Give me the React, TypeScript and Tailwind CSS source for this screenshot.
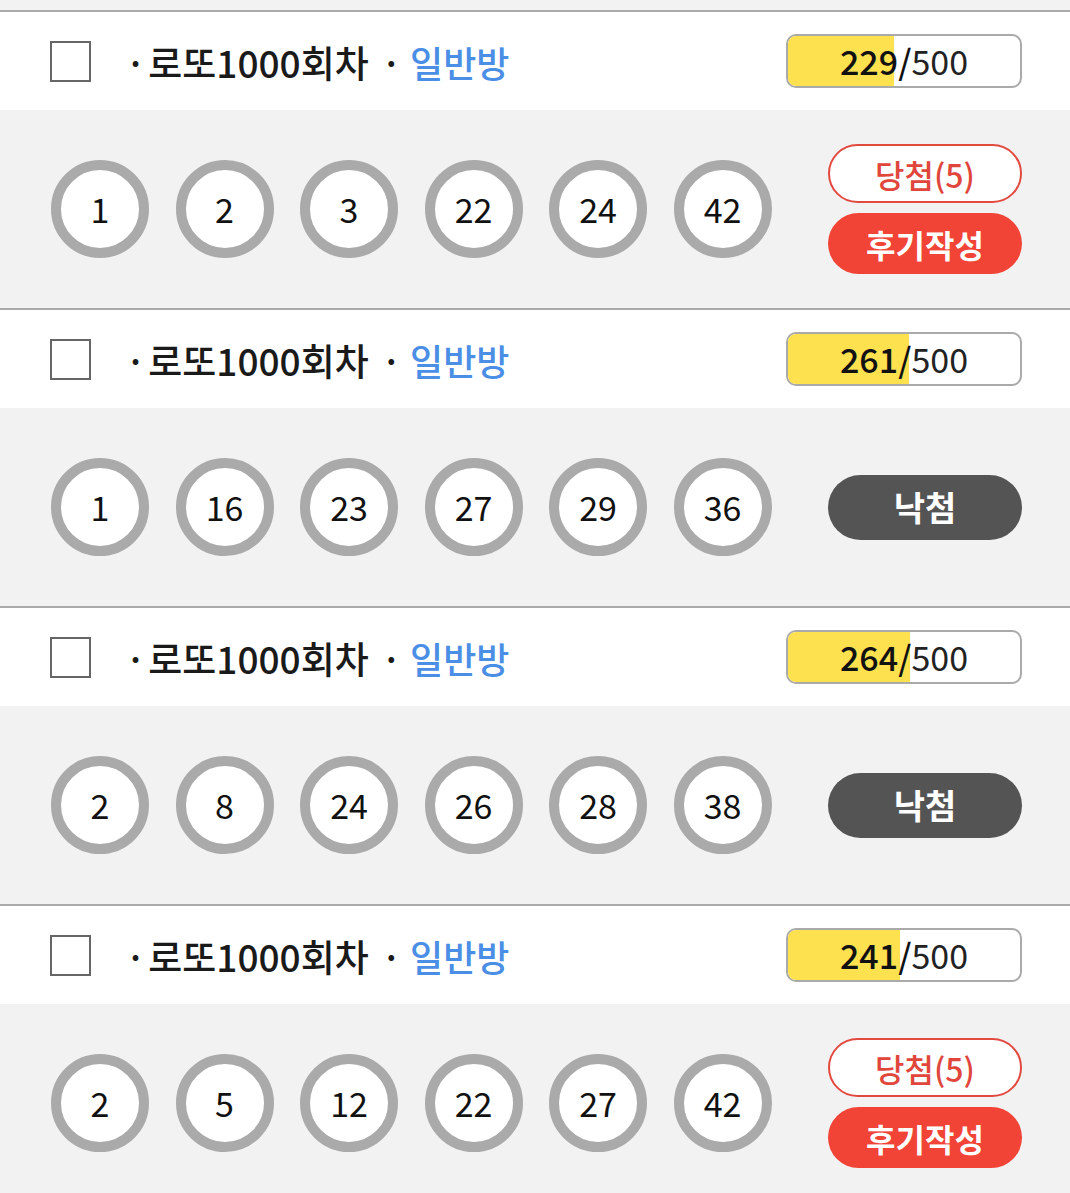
import React from "react";

type Ticket = {
  count: number;
  nums: number[];
  win: boolean;
};

const tickets: Ticket[] = [
  { count: 229, nums: [1, 2, 3, 22, 24, 42], win: true },
  { count: 261, nums: [1, 16, 23, 27, 29, 36], win: false },
  { count: 264, nums: [2, 8, 24, 26, 28, 38], win: false },
  { count: 241, nums: [2, 5, 12, 22, 27, 42], win: true },
];

const font = { fontFamily: '"Noto Sans CJK KR", "Noto Sans", sans-serif' };

function Progress({ value, max }: { value: number; max: number }) {
  return (
    <div className="relative w-[236px] h-[54px] rounded-[10px] border-2 border-[#aaa] bg-white overflow-hidden">
      <div
        className="absolute left-0 top-0 bottom-0 bg-[#fde14f]"
        style={{ width: `${(value / max) * 100}%` }}
      />
      <div className="relative h-full flex items-center justify-center text-[34px] leading-none text-[#111]">
        <span className="font-medium">{value}/</span>
        <span className="text-[#222]">{max}</span>
      </div>
    </div>
  );
}

function Ball({ n }: { n: number }) {
  return (
    <div className="w-[98px] h-[98px] rounded-full border-[10px] border-[#aaa] bg-white flex items-center justify-center text-[34px] leading-none text-[#111]">
      {n}
    </div>
  );
}

function TicketBlock({ t }: { t: Ticket }) {
  return (
    <div className="border-t-2 border-[#aaa]">
      {/* header row */}
      <div className="h-[98px] bg-white flex items-center pl-[50px] pr-[48px]">
        <div className="w-[41px] h-[41px] border-2 border-[#666] bg-white" />
        <div className="ml-[34px] pt-[3px] flex items-baseline text-[37px] leading-none font-medium text-[#1a1a1a]">
          <span>·</span>
          <span className="ml-[2px]">로또1000회차</span>
          <span className="ml-[12px]">·</span>
          <span className="ml-[8px] text-[#4a8ee6] text-[36px]">일반방</span>
        </div>
        <div className="ml-auto">
          <Progress value={t.count} max={500} />
        </div>
      </div>
      {/* numbers row */}
      <div className="h-[198px] bg-[#f2f2f2] flex items-center pl-[51px] pr-[48px]">
        <div className="flex gap-[26.5px]">
          {t.nums.map((n, i) => (
            <Ball key={i} n={n} />
          ))}
        </div>
        <div className="ml-auto w-[194px] flex flex-col gap-[10px]">
          {t.win ? (
            <>
              <div className="h-[59px] rounded-full border-2 border-[#e24a40] bg-white text-[#e0463c] text-[32px] leading-none font-medium flex items-center justify-center">
                당첨(5)
              </div>
              <div className="h-[61px] rounded-full bg-[#f24337] text-white text-[32px] leading-none font-bold flex items-center justify-center">
                후기작성
              </div>
            </>
          ) : (
            <div className="h-[65px] rounded-full bg-[#545454] text-white text-[34px] leading-none font-bold flex items-center justify-center">
              낙첨
            </div>
          )}
        </div>
      </div>
    </div>
  );
}

export default function App() {
  return (
    <div className="bg-[#f2f2f2] pt-[10px] h-[1193px] overflow-hidden" style={font}>
      {tickets.map((t, i) => (
        <TicketBlock key={i} t={t} />
      ))}
    </div>
  );
}
